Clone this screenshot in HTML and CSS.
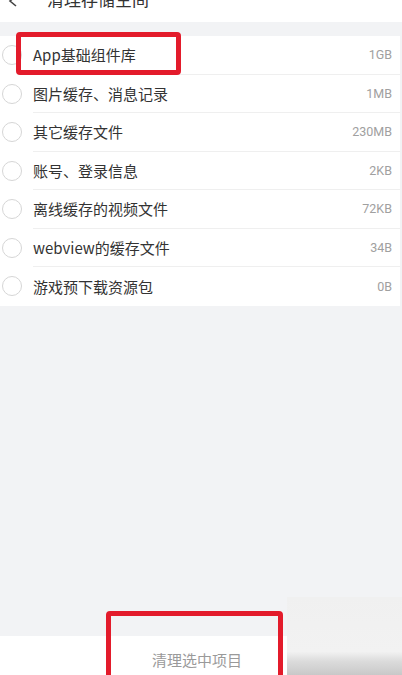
FILE: index.html
```html
<!DOCTYPE html>
<html lang="zh">
<head>
<meta charset="utf-8">
<link rel="stylesheet" href="styles.css">
</head>
<body>
<div class="page">
  <div class="header">
    <svg class="back" width="12" height="10" viewBox="0 0 12 10"><polyline points="9,-4 3,1 9,6" fill="none" stroke="#444" stroke-width="1.6"/></svg>
    <div class="title">清理存储空间</div>
  </div>
  <div class="gap"></div>
  <div class="list">
    <div class="row"><span class="radio"></span><div class="body"><span class="name">App基础组件库</span><span class="size">1GB</span></div></div>
    <div class="row"><span class="radio"></span><div class="body"><span class="name">图片缓存、消息记录</span><span class="size">1MB</span></div></div>
    <div class="row"><span class="radio"></span><div class="body"><span class="name">其它缓存文件</span><span class="size">230MB</span></div></div>
    <div class="row"><span class="radio"></span><div class="body"><span class="name">账号、登录信息</span><span class="size">2KB</span></div></div>
    <div class="row"><span class="radio"></span><div class="body"><span class="name">离线缓存的视频文件</span><span class="size">72KB</span></div></div>
    <div class="row"><span class="radio"></span><div class="body"><span class="name">webview的缓存文件</span><span class="size">34B</span></div></div>
    <div class="row"><span class="radio"></span><div class="body last"><span class="name">游戏预下载资源包</span><span class="size">0B</span></div></div>
  </div>
  <div class="spacer"></div>
  <div class="footer"><span class="clean">清理选中项目</span></div>
  <div class="mark mark1"></div>
  <div class="mark mark2"></div>
  <div class="blur"></div>
</div>
</body>
</html>
```
FILE: styles.css
```css
html, body { margin: 0; padding: 0; }
body { background: #f2f3f5; font-family: "Noto Sans CJK SC", "Noto Sans", sans-serif; }
.page { position: relative; width: 402px; height: 675px; overflow: hidden; display: flex; flex-direction: column; background: #f2f3f5; }
.header { height: 22px; background: #fff; display: flex; align-items: flex-start; overflow: hidden; flex: none; }
.back { margin-left: 7px; margin-top: 0; flex: none; }
.title { margin-left: 28px; margin-top: -10px; font-size: 17px; line-height: 17px; color: #333; }
.gap { height: 14px; flex: none; }
.list { background: #fff; flex: none; margin-right: 2px; }
.row { height: 38.5px; display: flex; align-items: center; }
.radio { width: 18px; height: 18px; border: 1px solid #d6d6d6; border-radius: 50%; margin-left: 2px; margin-right: 11px; flex: none; box-sizing: border-box; width: 20px; height: 20px; }
.body { flex: 1; height: 100%; display: flex; align-items: center; justify-content: space-between; border-bottom: 1px solid #efefef; box-sizing: border-box; padding-right: 8px; }
.body.last { border-bottom: none; }
.name { font-size: 15px; color: #333; }
.size { font-size: 12.5px; color: #a0a0a0; font-family: Roboto, "Noto Sans", sans-serif; }
.spacer { flex: 1; }
.footer { height: 39px; background: #fff; flex: none; display: flex; justify-content: center; align-items: center; padding-top: 8px; box-sizing: border-box; }
.clean { font-size: 15px; color: #9a9a9a; margin-left: -8px; }
.mark { position: absolute; border: 5px solid #e31b2b; border-radius: 4px; box-sizing: border-box; }
.mark1 { left: 16px; top: 32px; width: 165px; height: 43px; }
.mark2 { left: 106px; top: 611px; width: 177px; height: 70px; }
.blur { position: absolute; left: 287px; top: 597px; width: 115px; height: 78px; background: linear-gradient(to bottom, #f0f0f0 0%, #f2f2f2 70%, #dcdcdc 82%, #c8c8c8 100%); }
```
